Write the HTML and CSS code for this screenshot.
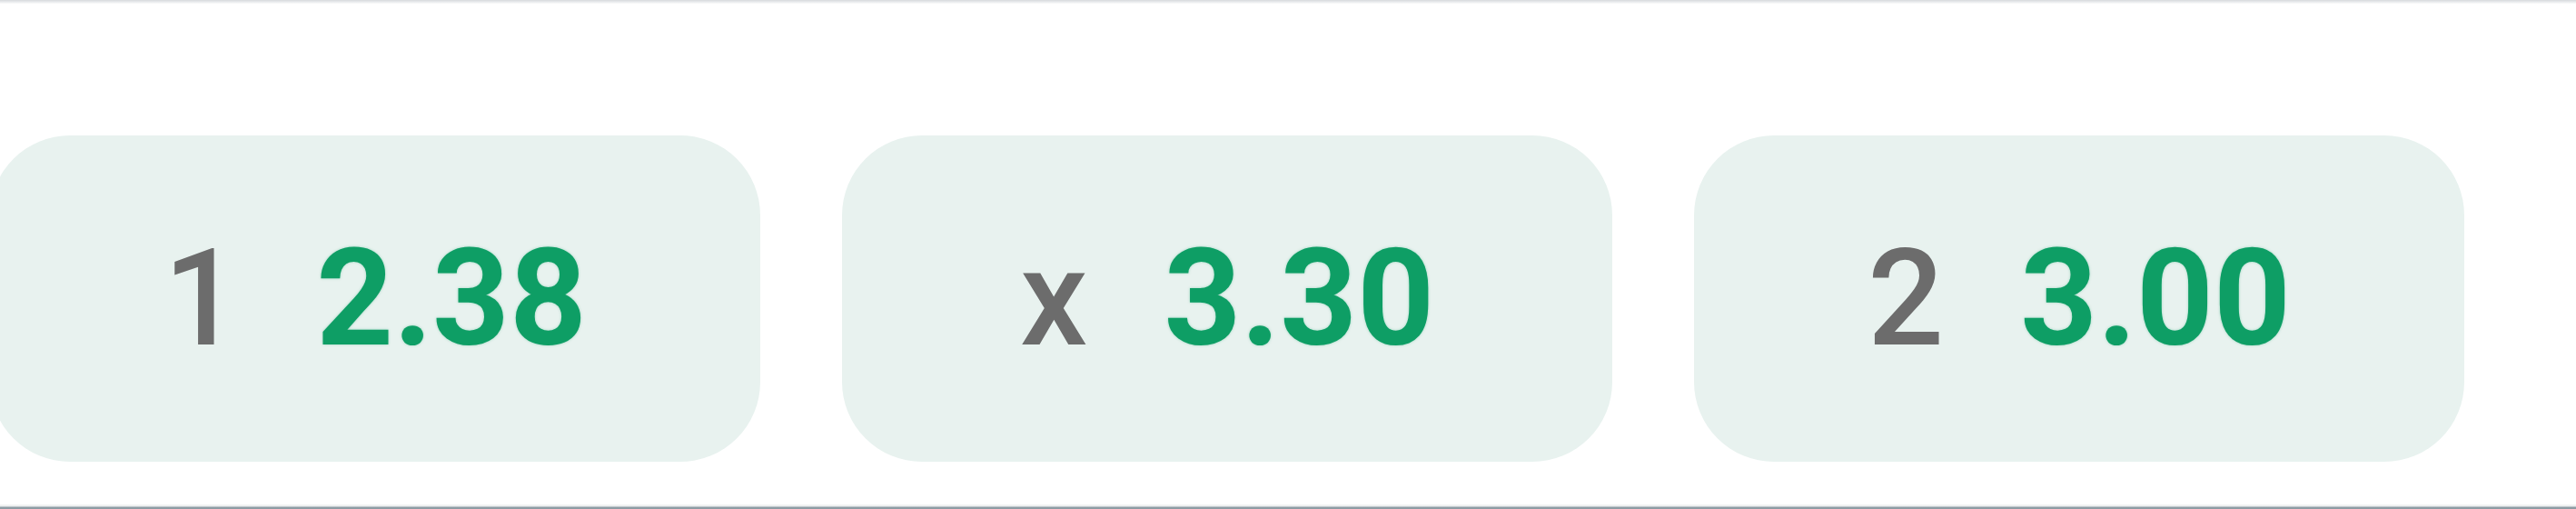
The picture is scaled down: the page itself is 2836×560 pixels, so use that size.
FILE: index.html
```html
<!doctype html>
<html lang="en">

<head>
  <meta charset="UTF-8">
  <title>Match odds</title>
  <link rel="stylesheet" href="styles.css">
</head>

<body>
  <div class="top_edge"></div>

  <main id="market">
    <section class="odds_row">
      <button class="odd">
        <span class="odd_label">1</span>
        <span class="odd_price">2.38</span>
      </button>
      <button class="odd">
        <span class="odd_label">x</span>
        <span class="odd_price">3.30</span>
      </button>
      <button class="odd">
        <span class="odd_label">2</span>
        <span class="odd_price">3.00</span>
      </button>
    </section>
  </main>

  <div class="bottom_edge"></div>
</body>
</html>
```

FILE: styles.css
```css
    * {
      box-sizing: border-box;
      padding: 0;
      margin: 0;
    }

    html, body {
      width: 2836px;
      height: 560px;
      overflow: hidden;
    }

    body {
      font-family: Roboto, "Liberation Sans", sans-serif;
      background-color: white;
      display: flex;
      flex-direction: column;
    }

    .top_edge {
      height: 4px;
      background: linear-gradient(#d6d9dc, #eceef0 60%, #fafafa);
    }

    main#market {
      flex: 1;
      padding-top: 145px;
    }

    section.odds_row {
      display: flex;
      gap: 90px;
      margin-left: -11px;
    }

      section.odds_row button.odd {
        width: 848px;
        height: 359px;
        flex: none;
        border: none;
        border-radius: 88px;
        background-color: #e8f2ef;
        display: flex;
        align-items: center;
        justify-content: center;
        gap: 84px;
        font-family: inherit;
        font-size: 148px;
        line-height: normal;
        cursor: pointer;
      }

      button.odd span.odd_label {
        color: #6c6c6c;
        font-weight: 500;
      }

      button.odd span.odd_price {
        color: #0e9e65;
        font-weight: 700;
        text-shadow: 0 0 3px rgba(14, 158, 101, 0.35);
      }

    .bottom_edge {
      height: 5px;
      background: linear-gradient(#f4f4f4, #eceeef 45%, #8e9ca4 55%, #8e9ca4);
    }
```
